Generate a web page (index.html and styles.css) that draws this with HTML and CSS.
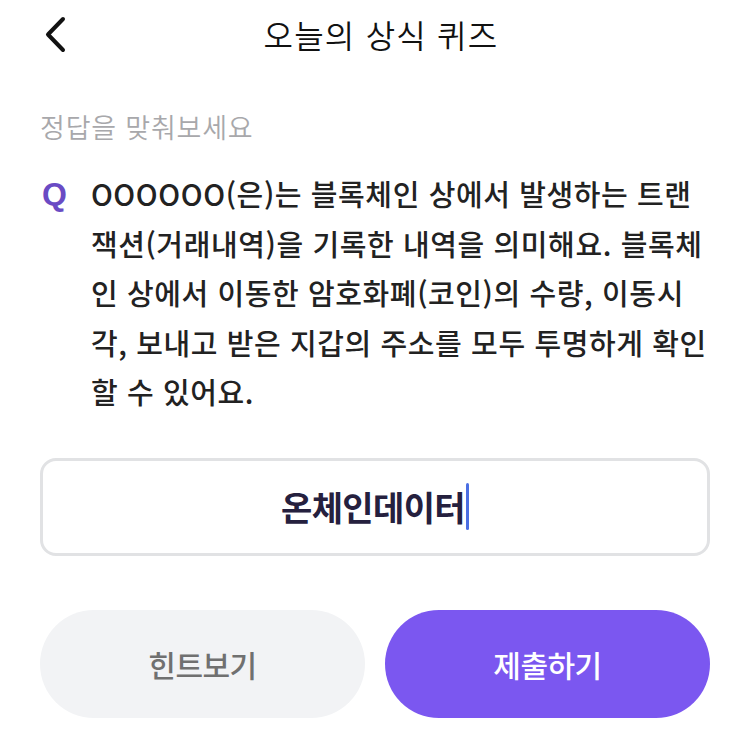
FILE: index.html
```html
<!DOCTYPE html>
<html lang="ko">
<head>
    <meta charset="UTF-8">
    <meta name="viewport" content="width=device-width, initial-scale=1.0">
    <title>오늘의 상식 퀴즈</title>
    <link rel="stylesheet" href="styles.css">
</head>
<body>
    <div class="container">
        <!-- Header -->
        <div class="header">
            <button class="back-btn" aria-label="뒤로">
                <svg width="24" height="38" viewBox="0 0 24 38">
                    <path d="M19 3 L4 18.5 L19 34" fill="none" stroke="#111" stroke-width="4" stroke-linecap="round" stroke-linejoin="round"/>
                </svg>
            </button>
            <h1>오늘의 상식 퀴즈</h1>
        </div>

        <!-- Question -->
        <p class="guide">정답을 맞춰보세요</p>
        <div class="question">
            <span class="q-mark">Q</span>
            <p class="q-text">OOOOOO(은)는 블록체인 상에서 발생하는 트랜<br>잭션(거래내역)을 기록한 내역을 의미해요. 블록체<br>인 상에서 이동한 암호화폐(코인)의 수량, 이동시<br>각, 보내고 받은 지갑의 주소를 모두 투명하게 확인<br>할 수 있어요.</p>
        </div>

        <!-- Answer -->
        <div class="answer-box">
            <span class="answer-text">온체인데이터</span><span class="caret"></span>
        </div>

        <!-- Buttons -->
        <div class="buttons">
            <button class="btn btn-hint">힌트보기</button>
            <button class="btn btn-submit">제출하기</button>
        </div>
    </div>
</body>
</html>
```

FILE: styles.css
```css
* {
    margin: 0;
    padding: 0;
    box-sizing: border-box;
}

body {
    font-family: "Noto Sans CJK KR", "Noto Sans", sans-serif;
    background: #ffffff;
    color: #222222;
}

.container {
    width: 750px;
    padding: 0 40px;
}

.header {
    height: 68px;
    display: flex;
    align-items: center;
    justify-content: center;
    position: relative;
}

.back-btn {
    position: absolute;
    left: 4px;
    top: 16px;
    background: none;
    border: none;
    display: flex;
}

.header h1 {
    font-size: 32px;
    font-weight: 350;
    color: #111111;
    letter-spacing: 1.2px;
    padding-left: 12px;
}

.guide {
    margin-top: 40px;
    font-size: 27px;
    font-weight: 350;
    color: #a8a8ab;
    letter-spacing: 0.8px;
    line-height: 38px;
}

.question {
    margin-top: 23px;
    display: flex;
    gap: 24px;
}

.q-mark {
    font-family: "Liberation Sans", sans-serif;
    font-size: 32px;
    font-weight: 700;
    color: #6a4bc4;
    line-height: 50px;
    padding-left: 2px;
}

.q-text {
    font-size: 29px;
    font-weight: 500;
    line-height: 49.5px;
    color: #222222;
    letter-spacing: 0.6px;
    white-space: nowrap;
}

.answer-box {
    margin-top: 41px;
    height: 98px;
    border: 3px solid #e1e2e4;
    border-radius: 16px;
    display: flex;
    align-items: center;
    justify-content: center;
}

.answer-text {
    font-size: 34px;
    font-weight: 700;
    color: #25203e;
    letter-spacing: -0.6px;
}

.caret {
    width: 3px;
    height: 47px;
    border-radius: 2px;
    background: #4b6fe3;
    margin-left: 1px;
}

.buttons {
    margin-top: 54px;
    display: flex;
    gap: 20px;
}

.btn {
    flex: 1;
    height: 108px;
    border: none;
    border-radius: 54px;
    font-family: inherit;
    font-size: 30px;
    font-weight: 500;
    letter-spacing: -0.5px;
}

.btn-hint {
    background: #f2f3f5;
    color: #707070;
}

.btn-submit {
    background: #7b57f0;
    color: #ffffff;
}
```
